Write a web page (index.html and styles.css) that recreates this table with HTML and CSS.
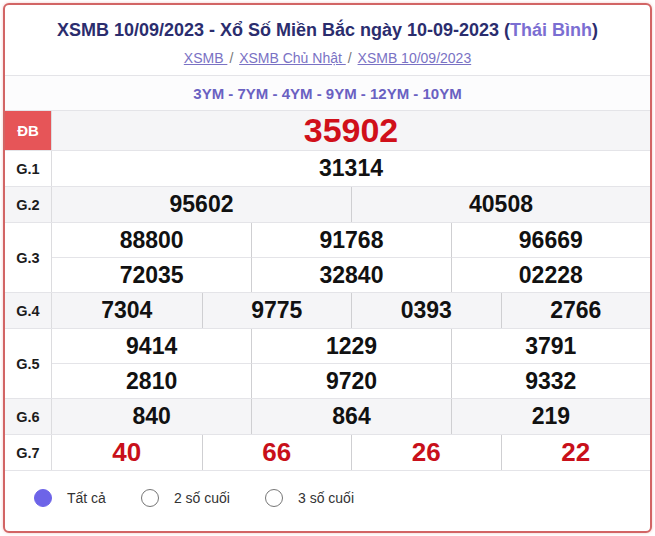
FILE: index.html
```html
<!DOCTYPE html>
<html lang="vi">
<head>
<meta charset="utf-8">
<title>XSMB 10/09/2023</title>
<link rel="stylesheet" href="styles.css">
</head>
<body>
<div class="card">
  <div class="head">
    <h1 class="title">XSMB 10/09/2023 - Xổ Số Miền Bắc ngày 10-09-2023 (<span class="prov">Thái Bình</span>)</h1>
    <div class="crumbs"><a href="#">XSMB </a> <span class="sep">/</span> <a href="#">XSMB Chủ Nhật </a> <span class="sep">/</span> <a href="#">XSMB 10/09/2023</a></div>
  </div>
  <div class="codes">3YM - 7YM - 4YM - 9YM - 12YM - 10YM</div>

  <div class="row alt db">
    <div class="lbl red">ĐB</div>
    <div class="nums c1"><span class="n big">35902</span></div>
  </div>
  <div class="row">
    <div class="lbl">G.1</div>
    <div class="nums c1"><span class="n">31314</span></div>
  </div>
  <div class="row alt">
    <div class="lbl">G.2</div>
    <div class="nums c2"><span class="n">95602</span><span class="n">40508</span></div>
  </div>
  <div class="row">
    <div class="lbl">G.3</div>
    <div class="nums c3 two">
      <span class="n">88800</span><span class="n">91768</span><span class="n">96669</span>
      <span class="n">72035</span><span class="n">32840</span><span class="n">02228</span>
    </div>
  </div>
  <div class="row alt">
    <div class="lbl">G.4</div>
    <div class="nums c4"><span class="n">7304</span><span class="n">9775</span><span class="n">0393</span><span class="n">2766</span></div>
  </div>
  <div class="row">
    <div class="lbl">G.5</div>
    <div class="nums c3 two">
      <span class="n">9414</span><span class="n">1229</span><span class="n">3791</span>
      <span class="n">2810</span><span class="n">9720</span><span class="n">9332</span>
    </div>
  </div>
  <div class="row alt">
    <div class="lbl">G.6</div>
    <div class="nums c3"><span class="n">840</span><span class="n">864</span><span class="n">219</span></div>
  </div>
  <div class="row">
    <div class="lbl">G.7</div>
    <div class="nums c4"><span class="n rn">40</span><span class="n rn">66</span><span class="n rn">26</span><span class="n rn">22</span></div>
  </div>

  <div class="opts">
    <label class="opt"><span class="radio on"></span>Tất cả</label>
    <label class="opt"><span class="radio"></span>2 số cuối</label>
    <label class="opt"><span class="radio"></span>3 số cuối</label>
  </div>
</div>
</body>
</html>
```

FILE: styles.css
```css
* { box-sizing: border-box; }
body {
  margin: 0;
  background: #fff;
  font-family: "Liberation Sans", Arial, sans-serif;
  color: #111;
}
.card {
  margin: 3px;
  width: 649px;
  height: 530px;
  border: 2px solid #d26565;
  border-radius: 6px;
  box-shadow: 0 0 3px rgba(230, 120, 120, 0.45);
  background: #fff;
  overflow: hidden;
}
.head {
  height: 71px;
  border-bottom: 1px solid #e4e4e8;
  padding-top: 14px;
  text-align: center;
}
.title {
  margin: 0;
  font-size: 18px;
  font-weight: bold;
  color: #2b2d6e;
  line-height: 22px;
}
.prov { color: #7b6ed2; }
.crumbs {
  margin-top: 9px;
  font-size: 14px;
  line-height: 16px;
  color: #777;
}
.crumbs a {
  color: #7a72c4;
  text-decoration: underline;
}
.sep { margin: 0 2px; }
.codes {
  height: 35px;
  border-bottom: 1px solid #e4e4e8;
  display: flex;
  align-items: center;
  justify-content: center;
  font-size: 15px;
  font-weight: bold;
  color: #6a61c2;
  background: #fcfcfd;
}
.row {
  display: grid;
  grid-template-columns: 47px 1fr;
  border-bottom: 1px solid #e4e4e8;
  min-height: 36px;
}
.row.alt { background: #f5f5f7; }
.row.db { min-height: 40px; }
.lbl {
  border-right: 1px solid #dcdcdf;
  display: flex;
  align-items: center;
  justify-content: center;
  font-size: 14.5px;
  font-weight: bold;
  color: #1c1c1c;
}
.lbl.red {
  background: #e65558;
  color: #fff;
  font-size: 15px;
}
.nums { display: grid; }
.c1 { grid-template-columns: 1fr; }
.c2 { grid-template-columns: repeat(2, 1fr); }
.c3 { grid-template-columns: repeat(3, 1fr); }
.c4 { grid-template-columns: repeat(4, 1fr); }
.n {
  display: flex;
  align-items: center;
  justify-content: center;
  height: 35px;
  font-size: 23px;
  font-weight: bold;
  color: #111;
  border-left: 1px solid #cfcfd2;
}
.c1 .n { border-left: 0; }
.c2 .n:first-child,
.c4 .n:first-child,
.c3 .n:nth-child(3n+1) { border-left: 0; }
.two .n { height: 34px; }
.two .n:nth-child(-n+3) {
  height: 35px;
  border-bottom: 1px solid #e4e4e8;
}
.n.big {
  height: 39px;
  font-size: 34px;
  color: #d0101a;
}
.n.rn {
  font-size: 26px;
  color: #c8101a;
}
.opts {
  display: flex;
  align-items: center;
  height: 60px;
  padding-left: 29px;
  padding-bottom: 6px;
  font-size: 14px;
  color: #333;
}
.opt {
  display: flex;
  align-items: center;
  margin-right: 35px;
}
.radio {
  width: 18px;
  height: 18px;
  border-radius: 50%;
  border: 1px solid #767676;
  margin-right: 15px;
  background: #fff;
}
.radio.on {
  background: #6d64e8;
  border-color: #6d64e8;
}
```
